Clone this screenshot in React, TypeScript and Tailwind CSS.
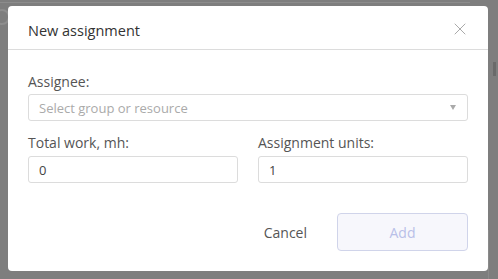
import { X } from 'lucide-react'

const font = { fontFamily: '"Open Sans", "Noto Sans", sans-serif' }

function Field({ label, value }: { label: string; value: string }) {
  return (
    <div className="flex flex-1 flex-col">
      <label className="text-[14px] leading-[20px] text-[#555]">{label}</label>
      <input
        readOnly
        value={value}
        className="mt-[3px] h-[27px] rounded-[3px] border border-[#dcdcdc] px-[10px] text-[13px] text-[#444] outline-none"
      />
    </div>
  )
}

export default function App() {
  return (
    <div className="relative h-[279px] w-[498px] overflow-hidden bg-[#7e7e7e]" style={font}>
      {/* faint app behind the overlay */}
      <div className="absolute left-0 top-[2px] h-px w-[470px] bg-[#8c8c8c]" />
      <div className="absolute left-[-6px] top-[9px] h-[16px] w-[16px] rounded-full border-2 border-[#8e8e8e]" />
      <div className="absolute right-[2px] top-[62px] h-[14px] w-[3px] bg-[#6a6a6a]" />
      <div className="absolute right-0 top-[230px] h-[49px] w-[10px] border-l border-[#8a8a8a]" />

      <div className="relative ml-[8px] mt-[6px] flex h-[265px] w-[480px] flex-col rounded-[4px] bg-white">
        <div className="flex h-[44px] items-start justify-between border-b border-[#dcdcdc] pl-[20px] pr-[18px] pt-[15px]">
          <span className="text-[14.5px] leading-[20px] text-[#333]">New assignment</span>
          <X className="mt-[-2px] h-[20px] w-[20px] text-[#aaa]" strokeWidth={1.2} />
        </div>

        <div className="flex flex-col px-[20px] pt-[22px]">
          <label className="text-[14px] leading-[20px] text-[#555]">Assignee:</label>
          <div className="mt-[2px] flex h-[27px] items-center justify-between rounded-[3px] border border-[#dcdcdc] pl-[10px] pr-[11px]">
            <span className="pt-[2px] text-[13px] text-[#aaa]">Select group or resource</span>
            <span className="h-0 w-0 border-x-[3.5px] border-t-[5px] border-x-transparent border-t-[#aaa]" />
          </div>

          <div className="mt-[12px] flex gap-[20px]">
            <Field label="Total work, mh:" value="0" />
            <Field label="Assignment units:" value="1" />
          </div>

          <div className="mt-[30px] flex items-center justify-end">
            <button className="mr-[30px] text-[14px] text-[#555]">Cancel</button>
            <button className="h-[38px] w-[131px] rounded-[4px] border border-[#d0d4ea] bg-[#f7f7fc] text-[14px] text-[#b9c0e8]">
              Add
            </button>
          </div>
        </div>
      </div>
    </div>
  )
}
